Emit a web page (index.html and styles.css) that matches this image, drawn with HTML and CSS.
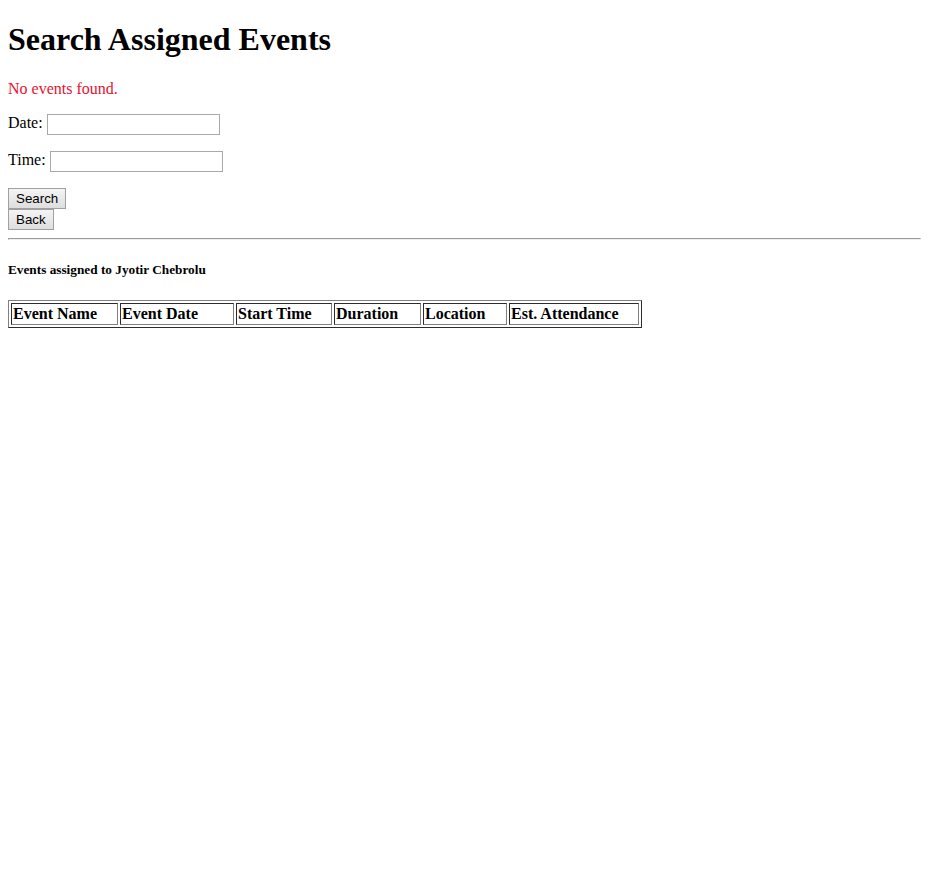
FILE: index.html
```html
<!DOCTYPE html>
<html>
<head>
<meta charset="utf-8">
<title>Search Assigned Events</title>
<link rel="stylesheet" href="styles.css">
</head>
<body>
<h1 class="title">Search Assigned Events</h1>
<p class="error">No events found.</p>
<form>
<p>Date: <input type="text" class="field"></p>
<p>Time: <input type="text" class="field"></p>
<button type="button" class="btn">Search</button><br>
<button type="button" class="btn">Back</button>
</form>
<hr>
<h5>Events assigned to Jyotir Chebrolu</h5>
<table class="events" border="1">
<tr>
<th class="c1">Event Name</th>
<th class="c2">Event Date</th>
<th class="c3">Start Time</th>
<th class="c4">Duration</th>
<th class="c5">Location</th>
<th class="c6">Est. Attendance</th>
</tr>
</table>
</body>
</html>
```
FILE: styles.css
```css
body {
  font-family: "Liberation Serif", "Times New Roman", serif;
  color: #000;
  background: #fff;
}
.title { margin-top: 13.44px; }
.error { color: #e8112d; }
.field {
  box-sizing: border-box;
  font-family: "Liberation Sans", Arial, sans-serif;
  font-size: 13.33px;
  border: 1px solid #a9a9a9;
  padding: 1px 2px;
  width: 173px;
  height: 21px;
  vertical-align: middle;
}
.btn {
  box-sizing: border-box;
  font-family: "Liberation Sans", Arial, sans-serif;
  font-size: 13.33px;
  height: 21px;
  padding: 1px 7px;
  border: 1px solid #a0a0a0;
  background: linear-gradient(#f4f4f4, #dedede);
  color: #000;
  vertical-align: top;
}
.events th { text-align: left; }
.c1 { width: 103px; }
.c2 { width: 110px; }
.c3 { width: 92px; }
.c4 { width: 83px; }
.c5 { width: 80px; }
.c6 { width: 126px; }
```
